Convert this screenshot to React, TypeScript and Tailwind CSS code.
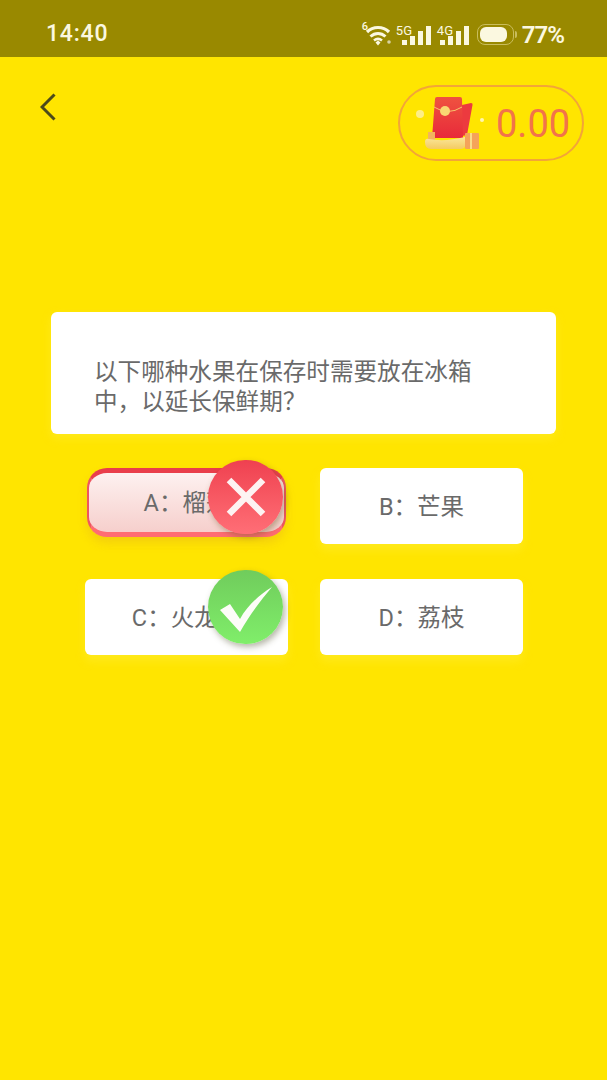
function WifiIcon() {
  return (
    <svg width="30" height="22" viewBox="0 0 30 22" fill="none" className="block">
      <path d="M5 8C11 2 21 2 27 8" stroke="#fbf8e0" strokeWidth="3.2" />
      <path d="M8.5 12.5C13 8.5 19 8.5 23.5 12.5" stroke="#fbf8e0" strokeWidth="3" />
      <path d="M12 16.5C14.5 14.5 17.5 14.5 20 16.5" stroke="#fbf8e0" strokeWidth="2.6" />
      <path d="M13.5 18.5L16 16.5L18.5 18.5L16 21.5Z" fill="#fbf8e0" />
      <circle cx="27" cy="18" r="1.8" fill="#d8d2a0" />
    </svg>
  );
}

function SignalBars() {
  const bars = [
    { x: 0, h: 5 },
    { x: 8, h: 9 },
    { x: 16, h: 14 },
    { x: 24, h: 19 },
  ];
  return (
    <svg width="29" height="19" viewBox="0 0 29 19" className="block">
      {bars.map((b) => (
        <rect key={b.x} x={b.x} y={19 - b.h} width="5" height={b.h} fill="#fbf8e0" />
      ))}
    </svg>
  );
}

function Network({ label, className }: { label: string; className: string }) {
  return (
    <div className={`relative flex h-[20px] items-end justify-end ${className}`}>
      <span className="absolute left-0 top-[-1px] font-['Roboto',sans-serif] text-[13px] leading-[13px] text-[#fbf8e0]">
        {label}
      </span>
      <SignalBars />
    </div>
  );
}

function Battery() {
  return (
    <div className="flex items-center">
      <div className="flex h-[21px] w-[37px] items-center rounded-[8px] border border-[#c9bd5c] p-[2px]">
        <div className="h-full w-[27px] rounded-[6px] bg-[#fbf8e0]" />
      </div>
      <div className="ml-[1px] h-[7px] w-[2px] rounded-r bg-[#c9bd5c]" />
    </div>
  );
}

function RedPacket() {
  return (
    <svg width="70" height="62" viewBox="0 0 70 62" className="block">
      <defs>
        <linearGradient id="env" x1="0" y1="0" x2="0" y2="1">
          <stop offset="0" stopColor="#ef5240" />
          <stop offset="1" stopColor="#e82a3a" />
        </linearGradient>
        <linearGradient id="base" x1="0" y1="0" x2="0" y2="1">
          <stop offset="0" stopColor="#fbe79a" />
          <stop offset="1" stopColor="#f4cb62" />
        </linearGradient>
      </defs>
      <circle cx="5" cy="22" r="4" fill="#fdf0a0" opacity="0.85" />
      <circle cx="67" cy="28" r="2" fill="#fff6b0" />
      <path d="M47 13L56 11Q58 11 57.5 13L52 43L47 44Z" fill="#ec3a3f" />
      <path d="M22 5H45Q47 5 47 7L48 46H17L20 7Q20 5 22 5Z" fill="url(#env)" />
      <path d="M19 15Q33 24 47 15" stroke="#f7c46c" strokeWidth="1" fill="none" />
      <circle cx="30" cy="19" r="5" fill="#f9d773" />
      <rect x="50" y="41" width="14" height="16" rx="1" fill="#f5a35a" />
      <rect x="55" y="41" width="2" height="16" fill="#f9dd8a" />
      <rect x="13" y="40" width="7" height="9" fill="#f3b45f" />
      <path d="M10 50Q10 46 14 47Q30 50 50 45V54Q50 57 45 57H16Q10 57 10 50Z" fill="url(#base)" />
    </svg>
  );
}

function Option({ children }: { children: React.ReactNode }) {
  return (
    <div className="flex h-[76px] items-center justify-center rounded-[6px] bg-white pt-[3px] text-[23.5px] text-[#6a6a6a] shadow-[0_6px_10px_rgba(255,240,80,0.35)]">
      {children}
    </div>
  );
}

export default function App() {
  return (
    <div className="flex h-[1080px] w-[607px] flex-col overflow-hidden bg-[#ffe500] font-['Roboto','Noto_Sans_CJK_SC',sans-serif]">
      <div className="flex h-[57px] items-center justify-between bg-[#998900] pl-[46px] pr-[43px] pt-[12px]">
        <span className="font-['Roboto',sans-serif] text-[23px] font-medium tracking-[0.8px] text-[#fbf8e0]">14:40</span>
        <div className="flex items-center">
          <div className="relative mr-[4px]">
            <span className="absolute left-0 top-[-3px] font-['Roboto',sans-serif] text-[11px] font-medium leading-[12px] text-[#fbf8e0]">6</span>
            <WifiIcon />
          </div>
          <div className="mr-[6px]">
            <Network label="5G" className="w-[35px]" />
          </div>
          <div className="mr-[8px]">
            <Network label="4G" className="w-[32px]" />
          </div>
          <Battery />
          <span className="ml-[5px] font-['Roboto',sans-serif] text-[24px] font-semibold tracking-[-1px] text-[#fbf8e0]">77%</span>
        </div>
      </div>

      <div className="mt-[28px] flex items-start justify-between pl-[40px] pr-[23px]">
        <svg width="16" height="28" viewBox="0 0 16 28" fill="none" className="mt-[8px] block">
          <path d="M14.5 1.5L2 14L14.5 26.5" stroke="#4c4a1a" strokeWidth="3" />
        </svg>
        <div className="flex h-[76px] w-[186px] items-center rounded-full border-2 border-[#f3a538] pl-[15px]">
          <RedPacket />
          <span className="ml-[11px] mt-[2px] font-['Roboto',sans-serif] text-[38px] leading-none text-[#f2744a]">0.00</span>
        </div>
      </div>

      <div className="mx-[51px] mt-[151px] h-[122px] rounded-[6px] bg-white pl-[43px] pr-[80px] pt-[45px] text-[23.6px] leading-[30px] text-[#6a6a6a] shadow-[0_4px_10px_rgba(255,240,80,0.35)]">
        以下哪种水果在保存时需要放在冰箱中，以延长保鲜期？
      </div>

      <div className="ml-[85px] mt-[34px] grid w-[438px] grid-cols-[203px_203px] gap-x-[32px] gap-y-[35px]">
        <div className="relative h-[76px]">
          <div className="ml-[2px] flex h-[69px] w-[199px] items-center justify-center rounded-[20px] border-x-2 border-t-[5px] border-b-[5px] border-x-[#ee5560] border-t-[#e93e4b] border-b-[#ff6c72] bg-gradient-to-b from-[#fdf1f0] to-[#f6cfcc] pt-[3px] text-[23.5px] text-[#6a6a6a] shadow-[0_6px_10px_rgba(220,160,40,0.3)]">
            A：榴莲
          </div>
          <div className="absolute left-[123px] top-[-8px] flex h-[74px] w-[75px] items-center justify-center rounded-full bg-gradient-to-b from-[#ef4050] to-[#ff6e76] shadow-[2px_3px_6px_rgba(110,90,40,0.45)]">
            <svg width="40" height="40" viewBox="0 0 40 40" className="block">
              <path d="M3 3L37 37M37 3L3 37" stroke="#fdf3f2" strokeWidth="6.5" />
            </svg>
          </div>
        </div>
        <Option>B：芒果</Option>
        <div className="relative">
          <Option>C：火龙果</Option>
          <div className="absolute left-[123px] top-[-9px] flex h-[74px] w-[75px] items-center justify-center rounded-full bg-gradient-to-b from-[#70cc5c] to-[#80ee6a] shadow-[2px_3px_6px_rgba(90,90,60,0.45)]">
            <svg width="54" height="47" viewBox="0 0 54 47" className="mt-[4px] block">
              <path d="M1 24L11 18L21 33C28 20 40 9 53 1C42 14 30 30 21 46Z" fill="#fdfdf8" />
            </svg>
          </div>
        </div>
        <Option>D：荔枝</Option>
      </div>
    </div>
  );
}
